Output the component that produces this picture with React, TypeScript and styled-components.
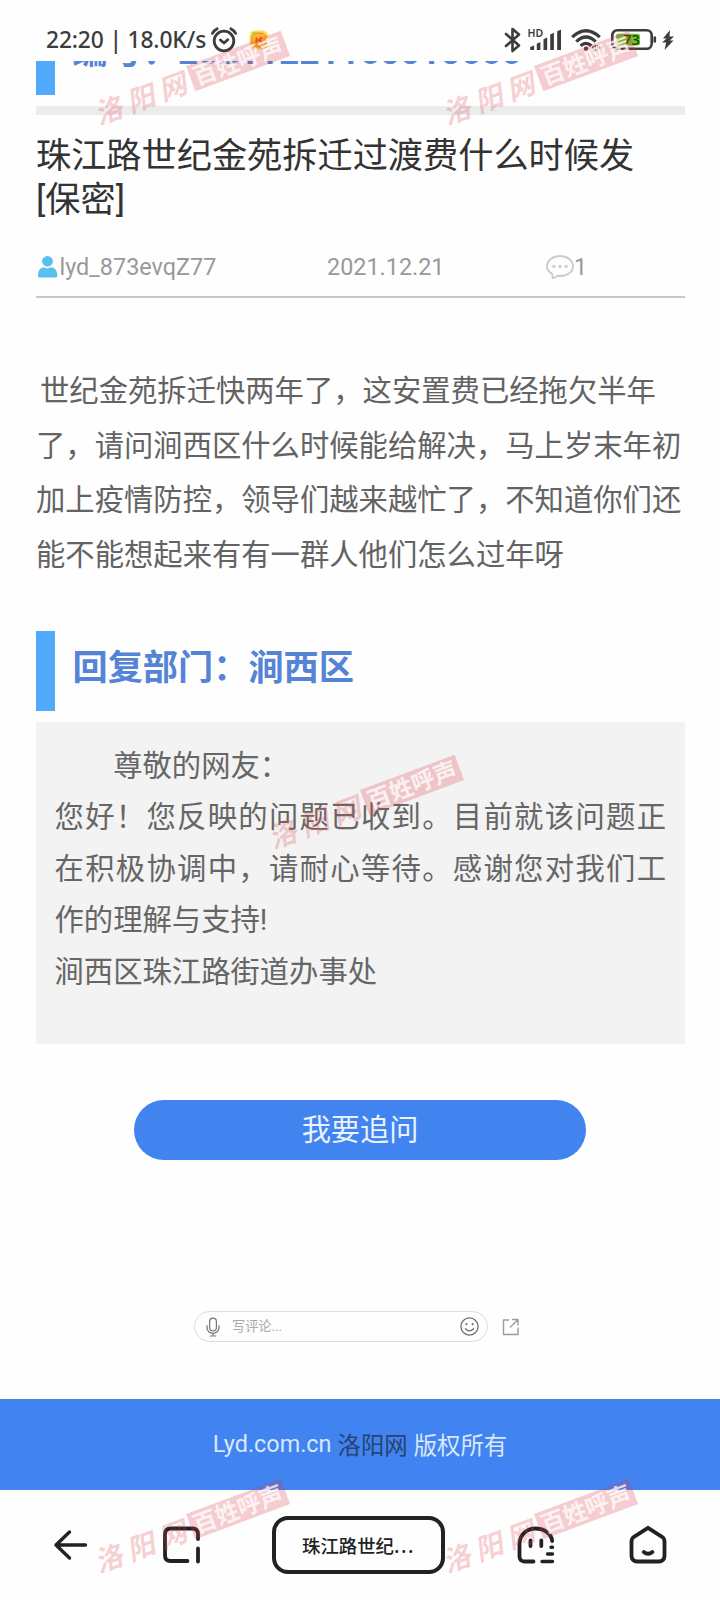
import React from 'react';
import styled, { createGlobalStyle } from 'styled-components';

const Global = createGlobalStyle`
  *, *::before, *::after { box-sizing: border-box; }
  body { margin: 0; background: #fefefe; font-family: Roboto, "Noto Sans CJK SC", sans-serif; }
  svg { display: block; flex: none; overflow: visible; }
`;

const Screen = styled.div`
  position: relative;
  width: 720px;
  height: 1600px;
  overflow: hidden;
  display: flex;
  flex-direction: column;
  background: #fefefe;
`;

const StatusBar = styled.header`
  height: 61px;
  flex: none;
  padding: 18px 46px 0 46px;
  display: flex;
  justify-content: space-between;
  color: #3c3c3c;
`;
const StatusGroup = styled.div`
  display: flex;
  height: 43px;
  align-items: center;
`;
const Clock = styled.span`
  font: 500 22.8px/43px "Noto Sans", sans-serif;
  letter-spacing: -0.15px;
  white-space: pre;
  width: 165px;
`;
const Gap = styled.span<{ $w: number }>`
  width: ${(p) => p.$w}px;
`;

const Article = styled.main`
  padding: 0 35px 0 36px;
  display: flex;
  flex-direction: column;
`;
const Clip = styled.div`
  height: 34px;
  overflow: hidden;
  display: flex;
  align-items: flex-end;
`;
const SectionHead = styled.h2<{ $top?: number }>`
  margin: ${(p) => p.$top ?? 0}px 0 0;
  height: 80px;
  flex: none;
  border-left: 19px solid #51a9fb;
  padding: 0 0 6px 17.5px;
  font-size: 35.2px;
  line-height: 74px;
  font-weight: 700;
  color: #5584d6;
  white-space: nowrap;
`;
const Divider = styled.hr`
  margin: 11px 0 0;
  border: 0;
  height: 9px;
  background: #ececec;
`;
const Title = styled.h1`
  margin: 19px 0 0;
  font-weight: 400;
  font-size: 35.2px;
  line-height: 44px;
  color: #333;
`;
const Meta = styled.div`
  margin-top: 26px;
  height: 50px;
  padding-bottom: 10px;
  border-bottom: 2px solid #c8c8c8;
  display: grid;
  grid-template-columns: 291px 219px 1fr;
  align-items: center;
  font-size: 23.4px;
  color: #999;
`;
const MetaItem = styled.span<{ $gap?: number }>`
  display: flex;
  align-items: center;
  gap: ${(p) => p.$gap ?? 0}px;
  line-height: 38px;
`;
const Body = styled.p`
  margin: 66px 0 0;
  font-size: 29.33px;
  line-height: 54.6px;
  color: #636363;
`;
const BodyLine = styled.span`
  display: block;
  white-space: nowrap;

  &:first-child {
    text-indent: 4px;
  }
`;
const Reply = styled.section`
  margin-top: 11px;
  height: 322px;
  padding: 18.5px 19px 0 18.5px;
  background: #f3f3f3;
  font-size: 29.33px;
  line-height: 51.4px;
  color: #666;
`;
const ReplyLine = styled.p<{ $indent?: boolean }>`
  margin: 0;
  text-align: justify;
  text-indent: ${(p) => (p.$indent ? '2em' : '0')};
`;
const AskButton = styled.button`
  margin: 56px 0 0 98px;
  width: 452px;
  height: 60px;
  padding: 0;
  border: 0;
  border-radius: 30px;
  background: #4184f0;
  color: #eaf2fd;
  font: 400 29.2px/58px Roboto, "Noto Sans CJK SC", sans-serif;
`;
const CommentRow = styled.div`
  margin: 151px 0 0 158px;
  display: flex;
  align-items: center;
  gap: 14px;
`;
const CommentField = styled.div`
  width: 294px;
  height: 31px;
  border: 1px solid #dcdcdc;
  border-radius: 16px;
  padding: 0 8px 0 11px;
  display: flex;
  align-items: center;
`;
const Placeholder = styled.span`
  flex: 1;
  margin-left: 12px;
  font-size: 13.2px;
  line-height: 28px;
  color: #aaa;
`;
const Footer = styled.footer`
  margin-top: 57px;
  height: 91px;
  flex: none;
  background: #4183f0;
  border-top: 1px solid #4a86d8;
  display: flex;
  justify-content: center;
  align-items: center;
  gap: 6px;
  padding-bottom: 2px;
  font-size: 23.4px;
  color: #d9e8fc;
`;
const Owner = styled.span`
  color: #27436f;
`;
const NavBar = styled.nav`
  flex: 1;
  padding: 26px 33px 0 54px;
  display: flex;
  align-items: flex-start;
  color: #222;
`;
const NavIcon = styled.div<{ $left: number }>`
  margin-left: ${(p) => p.$left}px;
  height: 57px;
  display: flex;
  align-items: center;
`;
const TabTitle = styled.div`
  margin-left: 71px;
  width: 173px;
  height: 58px;
  border: 4px solid #222;
  border-radius: 16px;
  text-align: center;
  font: 500 18.4px/50px "Noto Sans CJK SC", sans-serif;
  color: #222;
`;
const Dots = styled.span`
  letter-spacing: 1.5px;
`;

const Mark = styled.div<{ $x: number; $y: number }>`
  position: absolute;
  left: ${(p) => p.$x}px;
  top: ${(p) => p.$y}px;
  display: flex;
  align-items: center;
  transform: rotate(-20.4deg);
  transform-origin: 96px 0;
  pointer-events: none;
  font-family: "Noto Sans CJK SC", sans-serif;
  font-weight: 700;
  white-space: nowrap;
`;
const MarkName = styled.span`
  width: 96px;
  margin-left: -6px;
  margin-right: 6px;
  font-size: 28px;
  line-height: 27px;
  letter-spacing: 6px;
  font-style: italic;
  color: rgba(222, 70, 80, 0.26);
`;
const MarkSeal = styled.span`
  width: 101px;
  height: 27px;
  background: rgba(220, 55, 68, 0.25);
  color: rgba(255, 255, 255, 0.75);
  font-size: 23.5px;
  line-height: 25px;
  text-align: center;
`;

const Watermark = ({ x, y }: { x: number; y: number }) => (
  <Mark $x={x} $y={y}>
    <MarkName>洛阳网</MarkName>
    <MarkSeal>百姓呼声</MarkSeal>
  </Mark>
);

const stroke = { fill: 'none', stroke: 'currentColor', strokeLinecap: 'round', strokeLinejoin: 'round' } as const;

const Alarm = () => (
  <svg width="26" height="26" viewBox="0 0 26 26" {...stroke} strokeWidth="2.8">
    <circle cx="13" cy="14" r="9.8" />
    <path d="M9.4 13 13 16l3.8-3.2M1.4 6.4Q3 3.4 6.2 1.8M24.6 6.4Q23 3.4 19.8 1.8" />
  </svg>
);
const Coin = () => (
  <svg width="20" height="20" viewBox="0 0 20 20">
    <rect x="0.5" y="0.5" width="19" height="19" rx="6" fill="#fbdc5c" />
    <rect x="2.8" y="3" width="14.4" height="14" rx="5" fill="#fbb52f" stroke="#ee8a20" />
    <path d="M7.5 7.5v5M13 7.3 10 10l3 2.8" fill="none" stroke="#e4541c" strokeWidth="2" />
    <path d="M3 1.5l3 1-1 3z" fill="#8ccf4d" />
  </svg>
);
const Bluetooth = () => (
  <svg width="17" height="26" viewBox="0 0 17 26" {...stroke} strokeWidth="2.6">
    <path d="M2 7 15 18.5 8.5 24V2L15 7.5 2 19" />
  </svg>
);
const SignalText = styled.text`
  font: 600 10.5px "Noto Sans", sans-serif;
`;
const BatteryText = styled.text`
  font: 500 14.5px "Noto Sans", sans-serif;
`;
const Signal = () => (
  <svg width="34" height="23" viewBox="0 0 34 23" fill="currentColor">
    <SignalText x="-0.5" y="8.8">HD</SignalText>
    <path d="M2.2 22v-3l3.9-1.5V22zM8.8 22v-6.5l3.6-1.3V22zM15.5 22V11.2l3.7-1.8V22zM22.2 22V6.5l3.7-1.8V22zM29.2 22V3.2L33 1.6V22z" />
  </svg>
);
const Wifi = () => (
  <svg width="30" height="22" viewBox="0 0 30 22" {...stroke} strokeLinecap="butt" strokeWidth="3.2">
    <path d="M1.2 8.2Q15-4.6 28.8 8.2M5.3 12.6Q15 3.4 24.7 12.6M9.6 16.8Q15 12 20.4 16.8" />
    <circle cx="15" cy="19.6" r="1.4" fill="currentColor" strokeWidth="1.6" />
    <path d="M22 21v-4M24.2 21.5V16M26.4 16v5.500M28.4 16.5v3" strokeWidth="1.4" />
  </svg>
);
const Battery = () => (
  <svg width="46" height="21" viewBox="0 0 46 21">
    <rect x="1.3" y="1.3" width="39.4" height="18.4" rx="5" fill="none" stroke="currentColor" strokeWidth="2.6" />
    <rect x="5" y="4.8" width="24" height="11.6" rx="2" fill="#6ec52e" />
    <BatteryText x="12.2" y="15.8" fill="#22380f">73</BatteryText>
    <path d="M43.8 8.5v4" stroke="currentColor" strokeWidth="2.6" strokeLinecap="round" />
  </svg>
);
const Bolt = () => (
  <svg width="12" height="20" viewBox="0 0 12 20" fill="currentColor">
    <path d="M8 0 1 8.500h3.600L0 12.500h4.200L2.500 20 11.500 10.500H7.800L12 6.500H7.500z" />
  </svg>
);
const User = () => (
  <svg width="22" height="24" viewBox="0 0 22 24" fill="#5bc0ee">
    <circle cx="11.5" cy="6.3" r="5.4" />
    <path d="M2 20.5c0-5 2.4-8 6-8.2q3.5 2.2 7 0c3.6.2 6.4 3.2 6.4 8.2 0 1.6-1 2.1-2.4 2.1H4.4C3 22.6 2 22.1 2 20.5z" />
  </svg>
);
const Bubble = () => (
  <svg width="28" height="26" viewBox="0 0 28 26" fill="none" stroke="#c6cbd2" strokeWidth="1.8" strokeLinejoin="round">
    <path d="M6.5 24.2q.3-2.8-.6-4.6C2.6 17.7 1 15.3 1 12.2 1 6.5 6.7 2 14 2s13 4.5 13 10.2S21.3 22 14 22q-1.5 0-2.6-.2-2 2-4.9 2.4z" />
    <path d="M6.5 12.4h2.8M12.6 12.4h2.8M18.7 12.4h2.8" strokeWidth="2.8" />
  </svg>
);
const Mic = () => (
  <svg width="14" height="20" viewBox="0 0 14 20" {...stroke} stroke="#777" strokeWidth="1.2">
    <rect x="3.6" y="1.2" width="6.8" height="12.6" rx="3.4" />
    <path d="M1 8.5v2.3a6 5.6 0 0 0 12 0V8.5M7 16.4V19M4.2 19h5.6" />
  </svg>
);
const Smile = () => (
  <svg width="19" height="19" viewBox="0 0 19 19" {...stroke} stroke="#6d6d6d" strokeWidth="1.3">
    <circle cx="9.5" cy="9.5" r="8.6" />
    <path d="M5.5 11.8q4 4.2 8 0" />
    <path d="M6.4 6.9v.3M12.6 6.9v.3" strokeWidth="2" />
  </svg>
);
const Share = () => (
  <svg width="18" height="18" viewBox="0 0 18 18" {...stroke} stroke="#9c9c9c" strokeWidth="1.4">
    <path d="M6.5 2H1.5v14.5h14.5V10M10.5 1.5H16V7M16 1.5 8.5 9" />
  </svg>
);
const Back = () => (
  <svg width="34" height="30" viewBox="0 0 34 30" {...stroke} strokeWidth="3.4">
    <path d="M15.5 2 2 15l13.5 13M2 15h29.5" />
  </svg>
);
const Tabs = () => (
  <svg width="38" height="38" viewBox="0 0 38 38" {...stroke} strokeWidth="3.8">
    <path d="M35 13V8q0-5.500-5.500-5.500H7.500Q2 2.500 2 8v21.500q0 5.500 5.500 5.500h17M35 22.500v13" />
  </svg>
);
const Ghost = () => (
  <svg width="38" height="38" viewBox="0 0 38 38" {...stroke} strokeWidth="3.8">
    <path d="M16.5 35.5H7.5q-5 0-5-5V18.5C2.5 8.5 10 2.5 18.5 2.5 27.5 2.5 34.5 8 35.2 15M13.5 14.5v5.5M24.3 14.5v5.5" />
    <path d="M34 21.2h1.500M30.500 28h5M25 35.500h10.500" strokeWidth="3.4" />
  </svg>
);
const Home = () => (
  <svg width="38" height="38" viewBox="0 0 38 38" {...stroke} strokeWidth="3.8">
    <path d="M19 1.8 5 10.8Q2.5 12.5 2.5 15.5v14q0 6 6 6h21q6 0 6-6v-14q0-3-2.5-4.7z" />
    <path d="M14.8 26q4.2 3.6 8.6 0" />
  </svg>
);

export default function App() {
  return (
    <Screen>
      <Global />
      <StatusBar>
        <StatusGroup>
          <Clock>22:20 | 18.0K/s</Clock>
          <Alarm />
          <Gap $w={12} />
          <Coin />
        </StatusGroup>
        <StatusGroup>
          <Bluetooth />
          <Gap $w={7} />
          <Signal />
          <Gap $w={9} />
          <Wifi />
          <Gap $w={10} />
          <Battery />
          <Gap $w={5} />
          <Bolt />
        </StatusGroup>
      </StatusBar>
      <Article>
        <Clip>
          <SectionHead>编号：20211221160010666</SectionHead>
        </Clip>
        <Divider />
        <Title>
          珠江路世纪金苑拆迁过渡费什么时候发
          <br />
          [保密]
        </Title>
        <Meta>
          <MetaItem $gap={1.5}><User />lyd_873evqZ77</MetaItem>
          <MetaItem>2021.12.21</MetaItem>
          <MetaItem $gap={-0}><Bubble />1</MetaItem>
        </Meta>
        <Body>
          <BodyLine>世纪金苑拆迁快两年了，这安置费已经拖欠半年</BodyLine>
          <BodyLine>了，请问涧西区什么时候能给解决，马上岁末年初</BodyLine>
          <BodyLine>加上疫情防控，领导们越来越忙了，不知道你们还</BodyLine>
          <BodyLine>能不能想起来有有一群人他们怎么过年呀</BodyLine>
        </Body>
        <SectionHead $top={49}>回复部门：涧西区</SectionHead>
        <Reply>
          <ReplyLine $indent>尊敬的网友：</ReplyLine>
          <ReplyLine>您好！您反映的问题已收到。目前就该问题正在积极协调中，请耐心等待。感谢您对我们工作的理解与支持!</ReplyLine>
          <ReplyLine>涧西区珠江路街道办事处</ReplyLine>
        </Reply>
        <AskButton>我要追问</AskButton>
        <CommentRow>
          <CommentField>
            <Mic />
            <Placeholder>写评论...</Placeholder>
            <Smile />
          </CommentField>
          <Share />
        </CommentRow>
      </Article>
      <Footer>
        <span>Lyd.com.cn</span>
        <Owner>洛阳网</Owner>
        <span>版权所有</span>
      </Footer>
      <NavBar>
        <NavIcon $left={0}><Back /></NavIcon>
        <NavIcon $left={75}><Tabs /></NavIcon>
        <TabTitle>珠江路世纪<Dots>...</Dots></TabTitle>
        <NavIcon $left={72}><Ghost /></NavIcon>
        <NavIcon $left={74}><Home /></NavIcon>
      </NavBar>
      <Watermark x={90} y={66} />
      <Watermark x={438} y={66} />
      <Watermark x={264} y={790} />
      <Watermark x={90} y={1514} />
      <Watermark x={438} y={1514} />
    </Screen>
  );
}
